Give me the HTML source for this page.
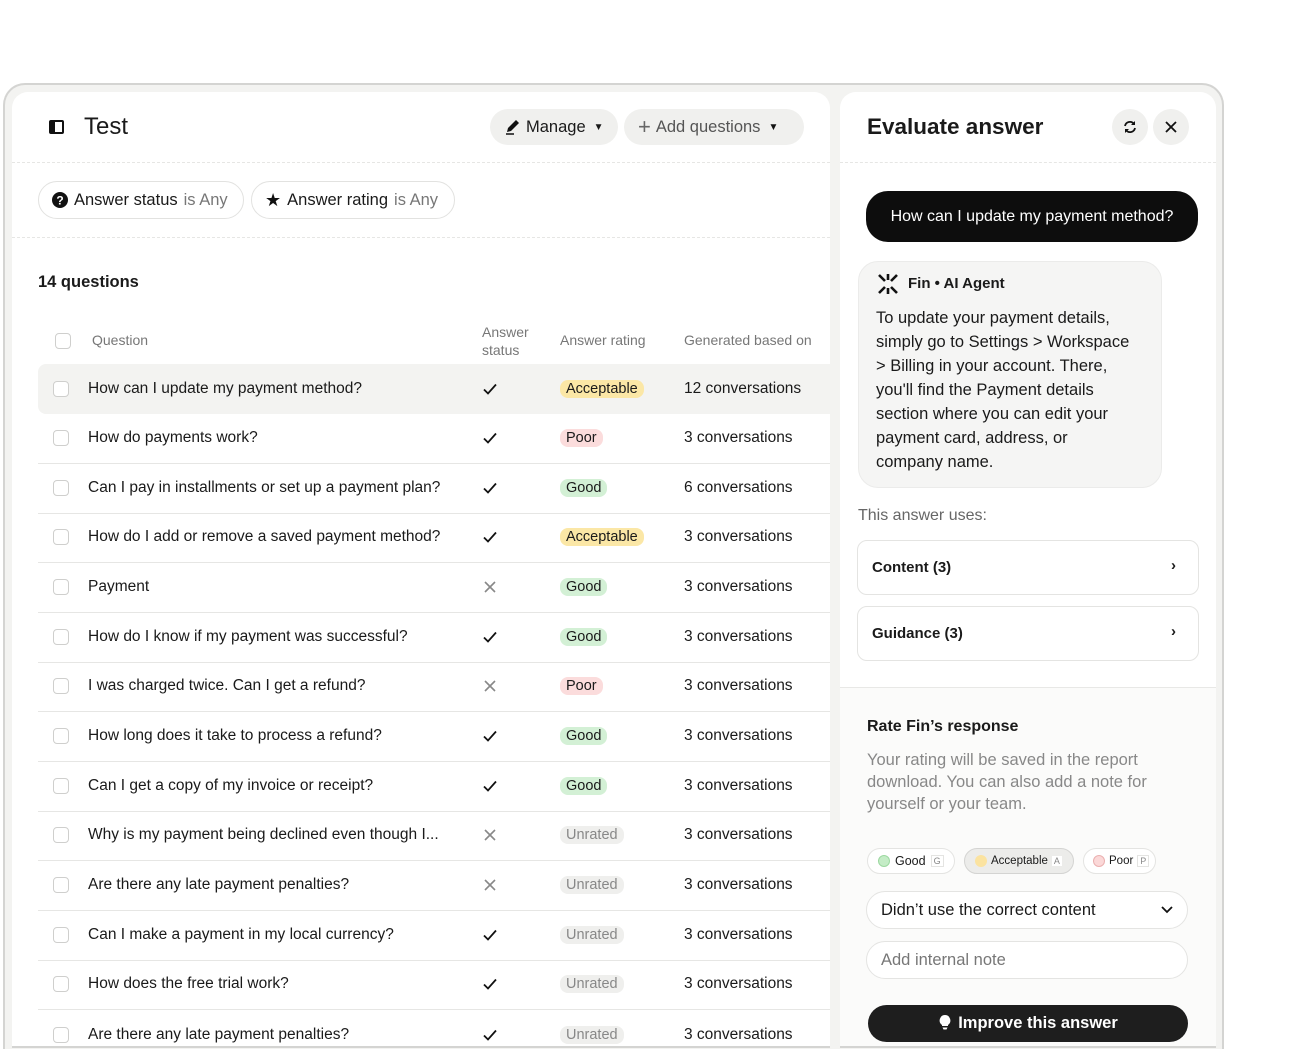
<!DOCTYPE html>
<html><head><meta charset="utf-8"><style>
*{box-sizing:border-box;margin:0;padding:0}
html,body{width:1301px;height:1049px;overflow:hidden}
body{background:#fff;font-family:"Liberation Sans",Arial,sans-serif;color:#1a1a1a;position:relative}
.frame{position:absolute;left:3px;top:83px;width:1221px;height:966px;border:2px solid #d4d4d2;border-bottom:none;border-radius:22px 22px 0 0;background:#f3f3f1}
.lp{position:absolute;left:12px;top:92px;width:818px;height:956px;background:#fff;border-radius:16px 16px 0 0;overflow:hidden;border-bottom:2px solid #d4d4d2}
.rp{position:absolute;left:840px;top:92px;width:376px;height:956px;background:#fff;border-radius:16px 16px 0 0;overflow:hidden;border-bottom:2px solid #d4d4d2}
.abs{position:absolute}
.dot{position:absolute;left:0;right:0;border-top:1px dashed #e6e6e4}
.btn{position:absolute;top:17px;height:36px;border-radius:18px;background:#f0f0ee;display:flex;align-items:center;font-size:16.5px;padding:0 14px;white-space:nowrap}
.chip{position:absolute;top:89px;height:38px;border:1px solid #e2e2e0;border-radius:19px;display:flex;align-items:center;font-size:16.5px;padding:0 13px;gap:6px;white-space:nowrap}
.chip span{color:#777}
.hd{position:absolute;font-size:14px;color:#777}
.row{position:absolute;left:26px;width:800px;height:49.7px;border-bottom:1px solid #e6e6e4;font-size:15.5px}
.row>*{position:absolute;top:50%;transform:translateY(-50%)}
.cb{left:15px;width:16px;height:16px;border:1.5px solid #cfcfcd;border-radius:4px;background:#fff}
.q{left:50px;white-space:nowrap}
.st{left:444px;width:16px;height:16px}
.pill{left:522px;padding:1px 6px;border-radius:8px;font-size:14.5px}
.cv{left:646px}
.P{background:#fbdcdc}.G{background:#d3f0d5}.A{background:#fbe7a6}.U{background:#efefed;color:#888}
</style></head><body>
<svg width="0" height="0" style="position:absolute"><defs>
<symbol id="ck" viewBox="0 0 16 16"><path d="M2 8.5 L6 12.5 L14 3.5" stroke="#111" stroke-width="1.8" fill="none"/></symbol>
<symbol id="x" viewBox="0 0 16 16"><path d="M3 3 L13 13 M13 3 L3 13" stroke="#888" stroke-width="1.6" fill="none"/></symbol>
</defs></svg>
<div class="frame"></div>
<div class="lp">
  <div class="abs" style="left:37px;top:28px;width:15px;height:14px;border:2px solid #111;border-left-width:6px;border-radius:2px"></div>
  <div class="abs" style="left:72px;top:21px;font-size:24px;font-weight:500">Test</div>
  <div class="btn" style="left:478px;width:128px">
    <svg width="18" height="18" viewBox="0 0 18 18" style="margin-right:4px"><path d="M3 14 L4 10 L12 2 L15 5 L7 13 Z" fill="#111"/><path d="M2 16 H10" stroke="#111" stroke-width="1.5"/></svg>
    Manage <span style="font-size:10px;margin-left:8px">▼</span></div>
  <div class="btn" style="left:612px;width:180px;color:#555">
    <span style="font-size:22px;font-weight:300;margin-right:5px;color:#666">+</span>Add questions <span style="font-size:10px;margin-left:8px;color:#111">▼</span></div>
  <div class="dot" style="top:70px"></div>
  <div class="chip" style="left:26px;width:206px"><svg width="16" height="16"><circle cx="8" cy="8" r="8" fill="#111"/><text x="8" y="12.5" font-size="12" font-weight="bold" fill="#fff" text-anchor="middle" font-family="Liberation Sans">?</text></svg>Answer status <span>is Any</span></div>
  <div class="chip" style="left:239px;width:204px"><span style="color:#111;font-size:18px">★</span>Answer rating <span>is Any</span></div>
  <div class="dot" style="top:145px"></div>
  <div class="abs" style="left:26px;top:181px;font-size:16.5px;font-weight:600">14 questions</div>
  <div class="abs cb" style="left:43px;top:241px;position:absolute;width:16px;height:16px"></div>
  <div class="hd" style="left:80px;top:240px">Question</div>
  <div class="hd" style="left:470px;top:231px;line-height:18px">Answer<br>status</div>
  <div class="hd" style="left:548px;top:240px">Answer rating</div>
  <div class="hd" style="left:672px;top:240px">Generated based on</div>

  <div class="row" style="top:272px;background:#f3f3f1;border-radius:8px 0 0 8px;border-bottom:none"><div class="cb"></div><div class="q">How can I update my payment method?</div><svg class="st"><use href="#ck"/></svg><div class="pill A">Acceptable</div><div class="cv">12 conversations</div></div>
  <div class="row" style="top:322px"><div class="cb"></div><div class="q">How do payments work?</div><svg class="st"><use href="#ck"/></svg><div class="pill P">Poor</div><div class="cv">3 conversations</div></div>
  <div class="row" style="top:372px"><div class="cb"></div><div class="q">Can I pay in installments or set up a payment plan?</div><svg class="st"><use href="#ck"/></svg><div class="pill G">Good</div><div class="cv">6 conversations</div></div>
  <div class="row" style="top:421px"><div class="cb"></div><div class="q">How do I add or remove a saved payment method?</div><svg class="st"><use href="#ck"/></svg><div class="pill A">Acceptable</div><div class="cv">3 conversations</div></div>
  <div class="row" style="top:471px"><div class="cb"></div><div class="q">Payment</div><svg class="st"><use href="#x"/></svg><div class="pill G">Good</div><div class="cv">3 conversations</div></div>
  <div class="row" style="top:521px"><div class="cb"></div><div class="q">How do I know if my payment was successful?</div><svg class="st"><use href="#ck"/></svg><div class="pill G">Good</div><div class="cv">3 conversations</div></div>
  <div class="row" style="top:570px"><div class="cb"></div><div class="q">I was charged twice. Can I get a refund?</div><svg class="st"><use href="#x"/></svg><div class="pill P">Poor</div><div class="cv">3 conversations</div></div>
  <div class="row" style="top:620px"><div class="cb"></div><div class="q">How long does it take to process a refund?</div><svg class="st"><use href="#ck"/></svg><div class="pill G">Good</div><div class="cv">3 conversations</div></div>
  <div class="row" style="top:670px"><div class="cb"></div><div class="q">Can I get a copy of my invoice or receipt?</div><svg class="st"><use href="#ck"/></svg><div class="pill G">Good</div><div class="cv">3 conversations</div></div>
  <div class="row" style="top:719px"><div class="cb"></div><div class="q">Why is my payment being declined even though I...</div><svg class="st"><use href="#x"/></svg><div class="pill U">Unrated</div><div class="cv">3 conversations</div></div>
  <div class="row" style="top:769px"><div class="cb"></div><div class="q">Are there any late payment penalties?</div><svg class="st"><use href="#x"/></svg><div class="pill U">Unrated</div><div class="cv">3 conversations</div></div>
  <div class="row" style="top:819px"><div class="cb"></div><div class="q">Can I make a payment in my local currency?</div><svg class="st"><use href="#ck"/></svg><div class="pill U">Unrated</div><div class="cv">3 conversations</div></div>
  <div class="row" style="top:868px"><div class="cb"></div><div class="q">How does the free trial work?</div><svg class="st"><use href="#ck"/></svg><div class="pill U">Unrated</div><div class="cv">3 conversations</div></div>
  <div class="row" style="top:918px;border-bottom:none"><div class="cb"></div><div class="q">Are there any late payment penalties?</div><svg class="st"><use href="#ck"/></svg><div class="pill U">Unrated</div><div class="cv">3 conversations</div></div>
</div>

<div class="rp">
  <div class="abs" style="left:27px;top:22px;font-size:22.5px;font-weight:600">Evaluate answer</div>
  <div class="abs" style="left:272px;top:17px;width:36px;height:36px;border-radius:18px;background:#f0f0ee"><svg style="position:absolute;left:11px;top:11px" width="14" height="14" viewBox="0 0 14 14"><path d="M2 6 A5 5 0 0 1 11 4 M12 8 A5 5 0 0 1 3 10" stroke="#111" stroke-width="1.8" fill="none"/><path d="M12 1 V5 H8 Z M2 13 V9 H6 Z" fill="#111"/></svg></div>
  <div class="abs" style="left:313px;top:17px;width:36px;height:36px;border-radius:18px;background:#f0f0ee"><svg style="position:absolute;left:12px;top:12px" width="12" height="12"><path d="M1 1 L11 11 M11 1 L1 11" stroke="#111" stroke-width="1.8"/></svg></div>
  <div class="dot" style="top:70px"></div>
  <div class="abs" style="left:26px;top:99px;width:332px;height:51px;border-radius:22px;background:#0d0d0d;color:#fff;font-size:16px;line-height:51px;text-align:center">How can I update my payment method?</div>
  <div class="abs" style="left:18px;top:169px;width:304px;height:227px;border-radius:20px;background:#f5f5f4;border:1px solid #ebebea"></div>
  <svg class="abs" style="left:37px;top:181px" width="22" height="22" viewBox="0 0 22 22"><g stroke="#111" stroke-width="2.6"><path d="M2 2 L8 8 M20 2 L14 8 M2 20 L8 14 M20 20 L14 14 M11 1 V7 M11 21 V15"/></g></svg>
  <div class="abs" style="left:68px;top:183px;font-size:15px;font-weight:600">Fin • AI Agent</div>
  <div class="abs" style="left:36px;top:214px;width:262px;font-size:16.5px;line-height:24px">To update your payment details, simply go to Settings &gt; Workspace &gt; Billing in your account. There, you'll find the Payment details section where you can edit your payment card, address, or company name.</div>
  <div class="abs" style="left:18px;top:415px;font-size:16px;color:#666">This answer uses:</div>
  <div class="abs" style="left:17px;top:448px;width:342px;height:55px;border:1px solid #e4e4e2;border-radius:10px;font-size:15px;font-weight:600;padding:18px 14px">Content (3)<span style="position:absolute;right:22px;top:16px">›</span></div>
  <div class="abs" style="left:17px;top:514px;width:342px;height:55px;border:1px solid #e4e4e2;border-radius:10px;font-size:15px;font-weight:600;padding:18px 14px">Guidance (3)<span style="position:absolute;right:22px;top:16px">›</span></div>
  <div class="abs" style="left:0;top:595px;width:376px;height:420px;background:#fbfbfa;border-top:1px solid #e8e8e6"></div>
  <div class="abs" style="left:27px;top:626px;font-size:16px;font-weight:600">Rate Fin’s response</div>
  <div class="abs" style="left:27px;top:657px;width:300px;font-size:16.5px;line-height:22px;color:#888">Your rating will be saved in the report download. You can also add a note for yourself or your team.</div>
  <div class="abs" style="left:27px;top:756px;width:88px;height:26px;border:1px solid #e4e4e2;border-radius:13px;background:#fff;font-size:12.5px;display:flex;align-items:center;padding-left:10px;gap:5px"><i style="width:12px;height:12px;border-radius:6px;background:#c4ecc6;border:1px solid #9cd8a0"></i>Good <small style="font-size:9px;color:#888;border:1px solid #e4e4e2;padding:0 2px">G</small></div>
  <div class="abs" style="left:124px;top:756px;width:110px;height:26px;border:1px solid #d4d4d2;border-radius:13px;background:#ececea;font-size:11.5px;display:flex;align-items:center;padding-left:10px;gap:4px"><i style="width:12px;height:12px;border-radius:6px;background:#fbe3a0"></i>Acceptable <small style="font-size:9px;color:#888;background:#fff;padding:0 2px">A</small></div>
  <div class="abs" style="left:243px;top:756px;width:73px;height:26px;border:1px solid #e4e4e2;border-radius:13px;background:#fff;font-size:11.5px;display:flex;align-items:center;padding-left:9px;gap:4px"><i style="width:12px;height:12px;border-radius:6px;background:#fbd8d8;border:1px solid #eab0b0"></i>Poor <small style="font-size:9px;color:#888;border:1px solid #e4e4e2;padding:0 2px">P</small></div>
  <div class="abs" style="left:26px;top:799px;width:322px;height:38px;border:1px solid #e4e4e2;border-radius:19px;background:#fff;font-size:16.5px;line-height:36px;padding-left:14px">Didn’t use the correct content<svg style="position:absolute;right:14px;top:14px" width="12" height="8"><path d="M1 1 L6 6 L11 1" stroke="#111" stroke-width="1.8" fill="none"/></svg></div>
  <div class="abs" style="left:26px;top:849px;width:322px;height:38px;border:1px solid #e4e4e2;border-radius:19px;background:#fff;font-size:16.5px;line-height:36px;padding-left:14px;color:#777">Add internal note</div>
  <div class="abs" style="left:28px;top:913px;width:320px;height:37px;border-radius:19px;background:#1e1e1e;color:#fff;font-size:16.5px;font-weight:600;line-height:37px;text-align:center"><svg width="14" height="16" viewBox="0 0 14 16" style="vertical-align:-2px;margin-right:6px"><path d="M7 1 A5.5 5.5 0 0 1 10 11 V12 H4 V11 A5.5 5.5 0 0 1 7 1 Z M4.5 13.5 H9.5 L8.5 15.5 H5.5 Z" fill="#fff"/></svg>Improve this answer</div>
</div>
</body></html>
